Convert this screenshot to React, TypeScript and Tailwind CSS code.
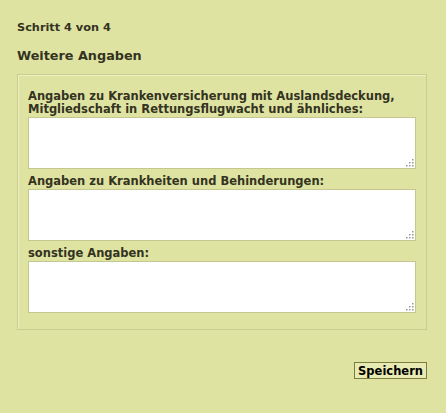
import React from "react";

const fields = [
  {
    id: "versicherung",
    label: (
      <>
        Angaben zu Krankenversicherung mit Auslandsdeckung,
        <br />
        Mitgliedschaft in Rettungsflugwacht und ähnliches:
      </>
    ),
  },
  { id: "krankheiten", label: "Angaben zu Krankheiten und Behinderungen:" },
  { id: "sonstiges", label: "sonstige Angaben:" },
];

// dotted resize grip, drawn over the textarea corner
const Grip = () => (
  <svg
    className="pointer-events-none absolute right-[2px] bottom-[2px]"
    width="8"
    height="8"
    viewBox="0 0 8 8"
  >
    {[
      [6, 0],
      [6, 3],
      [3, 3],
      [6, 6],
      [3, 6],
      [0, 6],
    ].map(([x, y]) => (
      <rect key={`${x}-${y}`} x={x} y={y} width="1.5" height="1.5" fill="#9a9a8a" />
    ))}
  </svg>
);

const App = () => {
  return (
    <div
      className="min-h-[413px] w-full bg-[#dfe3a2] px-[17px] pt-[21px] text-[#33331f]"
      style={{ fontFamily: '"DejaVu Sans", Verdana, sans-serif' }}
    >
      {/* Step header */}
      <p className="text-[11.3px] font-bold leading-[14px]">Schritt 4 von 4</p>
      <h2 className="mt-[13px] text-[12.8px] font-bold leading-[16px]">Weitere Angaben</h2>

      {/* Form fields */}
      <fieldset className="mt-[10px] w-[410px] border border-[#c9cd8f] px-[10px] pt-[15px] pb-[16px] shadow-[inset_1px_1px_0_#eef0c4]">
        {fields.map((f, i) => (
          <div key={f.id} className={i > 0 ? "mt-[6px]" : ""}>
            <label htmlFor={f.id} className="block text-[11.5px] font-bold leading-[13px]">
              {f.label}
            </label>
            <div className="relative mt-[1px] w-[388px]">
              <textarea
                id={f.id}
                className="block h-[52px] w-full resize-none border border-[#c4c88f] bg-white"
              />
              <Grip />
            </div>
          </div>
        ))}
      </fieldset>

      <div className="mt-[32px] flex w-[410px] justify-end">
        <button className="h-[17px] border border-[#7b7d3c] bg-[#e7eab2] px-[3px] text-[11.5px] font-bold leading-[14px] text-black">
          Speichern
        </button>
      </div>
    </div>
  );
};

export default App;
